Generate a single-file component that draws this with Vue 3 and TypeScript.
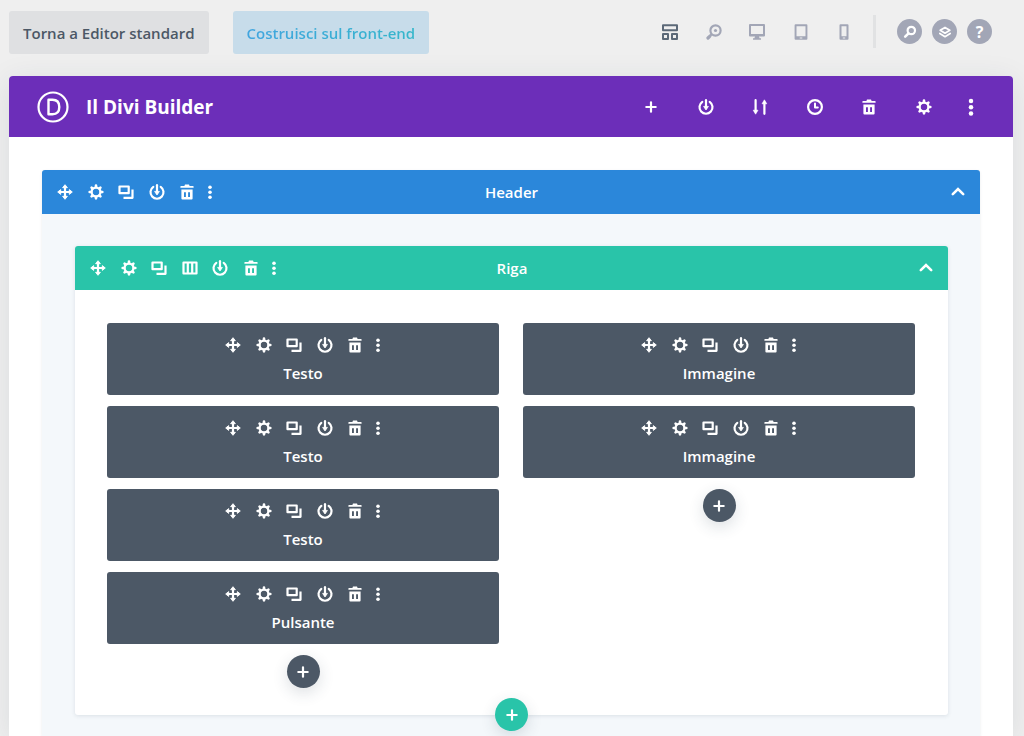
<script setup lang="ts">
interface Action {
  icon: string
  label: string
}

interface Column {
  id: number
  modules: string[]
}

const viewModes: Action[] = [
  { icon: 'wireframe', label: 'Wireframe' },
  { icon: 'zoom', label: 'Zoom' },
  { icon: 'desktop', label: 'Desktop' },
  { icon: 'tablet', label: 'Tablet' },
  { icon: 'phone', label: 'Phone' },
]

const builderActions: Action[] = [
  { icon: 'plus', label: 'Aggiungi' },
  { icon: 'power', label: 'Salva nella libreria' },
  { icon: 'sort', label: 'Portabilità' },
  { icon: 'clock', label: 'Cronologia' },
  { icon: 'trash', label: 'Elimina' },
  { icon: 'gear', label: 'Impostazioni' },
]

const move: Action = { icon: 'move', label: 'Sposta' }
const gear: Action = { icon: 'gear', label: 'Impostazioni' }
const clone: Action = { icon: 'clone', label: 'Duplica' }
const columnsAction: Action = { icon: 'columns', label: 'Struttura colonne' }
const save: Action = { icon: 'power', label: 'Salva nella libreria' }
const trash: Action = { icon: 'trash', label: 'Elimina' }

const itemActions: Action[] = [move, gear, clone, save, trash]
const rowActions: Action[] = [move, gear, clone, columnsAction, save, trash]

const columns: Column[] = [
  { id: 1, modules: ['Testo', 'Testo', 'Testo', 'Pulsante'] },
  { id: 2, modules: ['Immagine', 'Immagine'] },
]
</script>

<template>
  <div class="page">
    <svg class="sprite" aria-hidden="true">
      <symbol id="i-move" viewBox="0 0 16 16">
        <path d="M8 2.5v11M2.5 8h11" stroke="currentColor" stroke-width="2.2" />
        <path
          d="M8 .7l2.4 3H5.6zM8 15.3l2.4-3H5.600zM.7 8l3-2.400v4.800zM15.300 8l-3-2.400v4.800z"
          fill="currentColor" stroke="currentColor" stroke-width=".9" stroke-linejoin="round"
        />
      </symbol>
      <symbol id="i-gear" viewBox="0 0 16 16">
        <circle cx="8" cy="8" r="4.4" fill="none" stroke="currentColor" stroke-width="2.3" />
        <path
          d="M8 3V1.700M8 13v1.300M3 8H1.700M13 8h1.300M4.500 4.500l-.9-.9M11.500 4.500l.9-.9M4.500 11.500l-.9.9M11.500 11.500l.9.9"
          stroke="currentColor" stroke-width="2.700" stroke-linecap="round"
        />
      </symbol>
      <symbol id="i-clone" viewBox="0 0 16 16">
        <path
          d="M1.5 2.500h9.200v6.700H1.500zM14.500 5.500v8.300H5.500"
          fill="none" stroke="currentColor" stroke-width="2.200" stroke-linejoin="round"
        />
      </symbol>
      <symbol id="i-columns" viewBox="0 0 16 16">
        <path
          d="M1.5 2.5h13v11h-13zM5.8 2.5v11M10.2 2.5v11"
          fill="none" stroke="currentColor" stroke-width="2.2" stroke-linejoin="round"
        />
      </symbol>
      <symbol id="i-power" viewBox="0 0 16 16">
        <path
          d="M4.3 2.900a6.500 6.500 0 1 0 7.400 0"
          fill="none" stroke="currentColor" stroke-width="2.200" stroke-linecap="round"
        />
        <path d="M8 1.2v6.5" stroke="currentColor" stroke-width="2.2" stroke-linecap="round" />
        <path
          d="M5.6 7.4h4.8L8 11z"
          fill="currentColor" stroke="currentColor" stroke-width=".8" stroke-linejoin="round"
        />
      </symbol>
      <symbol id="i-trash" viewBox="0 0 16 16">
        <path
          d="M6 .4h4l.6 1.6h3.4q.6 0 .6.6v1.2H1.4V2.6q0-.6.6-.6h3.4z"
          fill="currentColor"
        />
        <path
          fill-rule="evenodd" fill="currentColor"
          d="M2.4 5.6h11.2v9q0 1-1 1H3.4q-1 0-1-1zM5 8.2v4.900h1.900V8.200zM9.100 8.200v4.900H11V8.200z"
        />
      </symbol>
      <symbol id="i-plus" viewBox="0 0 16 16">
        <path d="M8 3.3v9.4M3.3 8h9.4" stroke="currentColor" stroke-width="2.2" stroke-linecap="round" />
      </symbol>
      <symbol id="i-sort" viewBox="0 0 16 16">
        <path d="M3.6 1.2v11M12.4 14.8V4" stroke="currentColor" stroke-width="2.2" stroke-linecap="round" />
        <path
          d="M1.2 11.2h4.8l-2.4 4zM10 4.8h4.8l-2.4-4z"
          fill="currentColor" stroke="currentColor" stroke-width=".6" stroke-linejoin="round"
        />
      </symbol>
      <symbol id="i-clock" viewBox="0 0 16 16">
        <circle cx="8" cy="8" r="6.9" fill="none" stroke="currentColor" stroke-width="2.200" />
        <path
          d="M8 4.6v3.8h2.8"
          fill="none" stroke="currentColor" stroke-width="2" stroke-linecap="round" stroke-linejoin="round"
        />
      </symbol>
      <symbol id="i-chevron" viewBox="0 0 16 16">
        <path
          d="M2.8 10.100L8 5.100l5.200 5"
          fill="none" stroke="currentColor" stroke-width="2.600" stroke-linecap="round"
        />
      </symbol>
      <symbol id="i-dots" viewBox="0 0 6 16">
        <g fill="currentColor">
          <circle cx="3" cy="3.2" r="1.8" />
          <circle cx="3" cy="8.2" r="1.8" />
          <circle cx="3" cy="13.2" r="1.8" />
        </g>
      </symbol>
      <symbol id="i-wireframe" viewBox="0 0 16 16">
        <path
          d="M1 1.2h14v5H1zM1 10h5v5H1zM10 10h5v5h-5z"
          fill="none" stroke="currentColor" stroke-width="2" stroke-linejoin="round"
        />
      </symbol>
      <symbol id="i-zoom" viewBox="0 0 16 16">
        <circle cx="9.500" cy="6.500" r="5.100" fill="none" stroke="currentColor" stroke-width="2.200" />
        <circle cx="9.500" cy="6.500" r="1.600" fill="currentColor" />
        <path d="M5.900 10l-1.600 1.600" stroke="currentColor" stroke-width="2.200" />
        <path d="M3.700 12.300l-1.700 1.700" stroke="currentColor" stroke-width="3.200" stroke-linecap="round" />
      </symbol>
      <symbol id="i-desktop" viewBox="0 0 16 16">
        <path
          fill-rule="evenodd" fill="currentColor"
          d="M1 0h14q1 0 1 1v10.500q0 1-1 1H10l.6 1.700h1.400v1.600H4v-1.600h1.400l.6-1.700H1q-1 0-1-1V1q0-1 1-1zM2 2v8h12V2z"
        />
      </symbol>
      <symbol id="i-tablet" viewBox="0 0 16 16">
        <path
          fill-rule="evenodd" fill="currentColor"
          d="M2.600.3h10.800q1 0 1 1v13.400q0 1-1 1H2.600q-1 0-1-1V1.300q0-1 1-1zM3.500 2.300v10h9v-10zM6.700 13.500v1h2.600v-1z"
        />
      </symbol>
      <symbol id="i-phone" viewBox="0 0 16 16">
        <path
          fill-rule="evenodd" fill="currentColor"
          d="M4.500.3h7q1 0 1 1v13.400q0 1-1 1h-7q-1 0-1-1V1.300q0-1 1-1zM5.500 2.300v10h5v-10zM6.800 13.500v1h2.400v-1z"
        />
      </symbol>
      <symbol id="i-search" viewBox="0 0 16 16">
        <circle cx="9.300" cy="6.500" r="3.700" fill="none" stroke="currentColor" stroke-width="2.200" />
        <path d="M6.500 9.300l-3.300 3.300" stroke="currentColor" stroke-width="2.600" stroke-linecap="round" />
      </symbol>
      <symbol id="i-layers" viewBox="0 0 16 16">
        <path
          d="M8 3.400l4.800 2.900L8 9.200 3.200 6.300zM2.800 9.500L8 12.700l5.200-3.200"
          fill="none" stroke="currentColor" stroke-width="1.700" stroke-linejoin="round" stroke-linecap="round"
        />
      </symbol>
    </svg>

    <header class="topbar">
      <div class="switches">
        <button class="switch standard" type="button">Torna a Editor standard</button>
        <button class="switch frontend" type="button"><span>Costruisci sul front-end</span></button>
      </div>
      <div class="tools">
        <div class="modes">
          <button
            v-for="(mode, index) in viewModes"
            :key="mode.icon"
            class="icon-button"
            :class="{ active: index === 0 }"
            type="button"
            :aria-label="mode.label"
          >
            <svg class="icon" aria-hidden="true"><use :href="`#i-${mode.icon}`" /></svg>
          </button>
        </div>
        <div class="divider"></div>
        <div class="helpers">
          <button class="helper" type="button" aria-label="Cerca">
            <svg class="icon" aria-hidden="true"><use href="#i-search" /></svg>
          </button>
          <button class="helper" type="button" aria-label="Livelli">
            <svg class="icon" aria-hidden="true"><use href="#i-layers" /></svg>
          </button>
          <button class="helper" type="button">?</button>
        </div>
      </div>
    </header>

    <main class="builder">
      <div class="builder-head">
        <svg class="logo" viewBox="0 0 32 32" aria-hidden="true">
          <circle cx="16" cy="16" r="14.500" fill="none" stroke="currentColor" stroke-width="2.200" />
          <path
            d="M11.500 8.800h4q6.800 0 6.800 7.200t-6.800 7.200h-4z"
            fill="none" stroke="currentColor" stroke-width="2.400" stroke-linejoin="round"
          />
        </svg>
        <h1>Il Divi Builder</h1>
        <div class="builder-actions">
          <button
            v-for="action in builderActions"
            :key="action.icon"
            class="icon-button"
            type="button"
            :aria-label="action.label"
          >
            <svg class="icon" aria-hidden="true"><use :href="`#i-${action.icon}`" /></svg>
          </button>
        </div>
        <button class="icon-button" type="button" aria-label="Altro">
          <svg class="dots large" aria-hidden="true"><use href="#i-dots" /></svg>
        </button>
      </div>

      <section class="section">
        <div class="bar section-bar">
          <div class="toolbar">
            <div class="actions">
              <button v-for="action in itemActions" :key="action.icon" class="icon-button" type="button" :aria-label="action.label">
                <svg class="icon" aria-hidden="true"><use :href="`#i-${action.icon}`" /></svg>
              </button>
            </div>
            <button class="icon-button" type="button" aria-label="Altro">
              <svg class="dots" aria-hidden="true"><use href="#i-dots" /></svg>
            </button>
          </div>
          <h2>Header</h2>
          <button class="icon-button toggle" type="button" aria-label="Comprimi sezione">
            <svg class="icon" aria-hidden="true"><use href="#i-chevron" /></svg>
          </button>
        </div>

        <div class="section-body">
          <section class="row">
            <div class="bar row-bar">
              <div class="toolbar">
                <div class="actions wide">
                  <button v-for="action in rowActions" :key="action.icon" class="icon-button" type="button" :aria-label="action.label">
                    <svg class="icon" aria-hidden="true"><use :href="`#i-${action.icon}`" /></svg>
                  </button>
                </div>
                <button class="icon-button" type="button" aria-label="Altro">
                  <svg class="dots" aria-hidden="true"><use href="#i-dots" /></svg>
                </button>
              </div>
              <h2>Riga</h2>
              <button class="icon-button toggle" type="button" aria-label="Comprimi riga">
                <svg class="icon" aria-hidden="true"><use href="#i-chevron" /></svg>
              </button>
            </div>

            <div class="columns">
              <div v-for="column in columns" :key="column.id" class="column">
                <article v-for="(name, index) in column.modules" :key="index" class="module">
                  <div class="toolbar">
                    <div class="actions">
                      <button v-for="action in itemActions" :key="action.icon" class="icon-button" type="button" :aria-label="action.label">
                        <svg class="icon" aria-hidden="true"><use :href="`#i-${action.icon}`" /></svg>
                      </button>
                    </div>
                    <button class="icon-button" type="button" aria-label="Altro">
                      <svg class="dots" aria-hidden="true"><use href="#i-dots" /></svg>
                    </button>
                  </div>
                  <h3>{{ name }}</h3>
                </article>
                <button class="add" type="button" aria-label="Aggiungi modulo">
                  <svg class="icon" aria-hidden="true"><use href="#i-plus" /></svg>
                </button>
              </div>
            </div>
          </section>
          <button class="add add-row" type="button" aria-label="Aggiungi riga">
            <svg class="icon" aria-hidden="true"><use href="#i-plus" /></svg>
          </button>
        </div>
      </section>
    </main>
  </div>
</template>

<style>
body {
  margin: 0;
  background: #efefef;
}
</style>

<style scoped>
.page {
  box-sizing: border-box;
  display: flex;
  flex-direction: column;
  min-height: 100vh;
  padding: 11px 11px 0 9px;
  overflow: hidden;
  background: #efefef;
  color: #fff;
  font-family: "Open Sans", "Noto Sans", sans-serif;
  font-weight: 600;
}

.sprite {
  position: absolute;
  width: 0;
  height: 0;
}

button {
  margin: 0;
  padding: 0;
  border: 0;
  background: none;
  color: inherit;
  font: inherit;
  cursor: pointer;
}

h1,
h2,
h3 {
  margin: 0;
  font-weight: 600;
}

.icon {
  display: block;
  width: 16px;
  height: 16px;
}

.dots {
  display: block;
  width: 6px;
  height: 16px;
}

.dots.large {
  width: 8px;
  height: 20px;
}

.icon-button {
  display: block;
  flex: none;
}

.topbar {
  display: flex;
  justify-content: space-between;
  align-items: flex-start;
  padding-right: 21px;
  margin-bottom: 22px;
}

.switches {
  display: flex;
  gap: 24px;
}

.switch {
  height: 43px;
  padding: 0 14px;
  border-radius: 3px;
  font-size: 15px;
  line-height: 20px;
}

.standard {
  background: #dfe0e2;
  color: #4c5866;
}

.frontend {
  background: #c7dcea;
}

.frontend span {
  background: linear-gradient(90deg, #41a5df, #35b6cb);
  background-clip: text;
  color: transparent;
}

.tools {
  display: flex;
  align-items: center;
  gap: 21px;
  padding-top: 4px;
  color: #a2a6b6;
}

.modes {
  display: flex;
  justify-content: space-between;
  width: 190px;
}

.active {
  color: #5c6978;
}

.divider {
  width: 3px;
  height: 33px;
  background: #e1e2e3;
}

.helpers {
  display: flex;
  gap: 10px;
}

.helper {
  display: flex;
  align-items: center;
  justify-content: center;
  width: 25px;
  height: 25px;
  border-radius: 50%;
  background: #a2a6b6;
  color: #fff;
  font-size: 16px;
  font-weight: 700;
  line-height: 20px;
}

.builder {
  display: flex;
  flex: 1;
  flex-direction: column;
  border-radius: 4px 4px 0 0;
  background: #fff;
  box-shadow: 0 5px 30px rgba(43, 60, 80, 0.1);
}

.builder-head {
  display: flex;
  align-items: center;
  height: 61px;
  padding: 0 38px 0 28px;
  border-radius: 4px 4px 0 0;
  background: #6c2eb9;
}

.logo {
  width: 32px;
  height: 32px;
}

h1 {
  margin: 0 auto 0 17px;
  font-size: 19px;
  font-weight: 700;
  line-height: 28px;
}

.builder-actions {
  display: flex;
  justify-content: space-between;
  width: 289px;
  margin-right: 35px;
}

.section {
  display: flex;
  flex: 1;
  flex-direction: column;
  margin: 33px 33px 0;
  border-radius: 3px 3px 0 0;
  background: #f4f8fb;
  box-shadow: 0 1px 3px rgba(43, 60, 80, 0.1);
}

.bar {
  display: grid;
  grid-template-columns: 1fr auto 1fr;
  align-items: center;
  height: 44px;
  padding: 0 14px 0 15px;
  border-radius: 3px 3px 0 0;
}

.section-bar {
  background: #2b87da;
}

.row-bar {
  background: #29c4a9;
}

h2,
h3 {
  font-size: 15px;
  line-height: 20px;
}

.toggle {
  justify-self: end;
}

.toolbar {
  display: flex;
  align-items: center;
  gap: 12px;
}

.actions {
  display: flex;
  justify-content: space-between;
  width: 138px;
}

.actions.wide {
  width: 169px;
}

.section-body {
  padding: 32px 32px 0 33px;
}

.row {
  border-radius: 3px;
  background: #fff;
  box-shadow: 0 1px 4px rgba(43, 60, 80, 0.12);
}

.columns {
  display: grid;
  grid-template-columns: 1fr 1fr;
  gap: 24px;
  padding: 33px 33px 27px 32px;
}

.column {
  display: flex;
  flex-direction: column;
  gap: 11px;
}

.module {
  display: flex;
  flex-direction: column;
  align-items: center;
  gap: 10px;
  box-sizing: border-box;
  height: 72px;
  padding-top: 14px;
  border-radius: 3px;
  background: #4c5866;
}

.add {
  display: flex;
  align-items: center;
  justify-content: center;
  align-self: center;
  width: 33px;
  height: 33px;
  border-radius: 50%;
  background: #4c5866;
  box-shadow: 0 5px 15px rgba(43, 60, 80, 0.16);
}

.add-row {
  position: relative;
  margin: -17px auto 0;
  background: #29c4a9;
}
</style>
